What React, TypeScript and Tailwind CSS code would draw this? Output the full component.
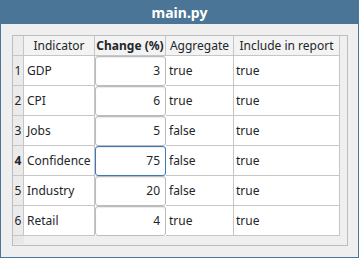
import React from "react";

interface Row {
  name: string;
  change: number;
  aggregate: boolean;
  report: boolean;
}

const rows: Row[] = [
  { name: "GDP", change: 3, aggregate: true, report: true },
  { name: "CPI", change: 6, aggregate: true, report: true },
  { name: "Jobs", change: 5, aggregate: false, report: true },
  { name: "Confidence", change: 75, aggregate: false, report: true },
  { name: "Industry", change: 20, aggregate: false, report: true },
  { name: "Retail", change: 4, aggregate: true, report: true },
];

const current = 3;

const App: React.FC = () => {
  return (
    <div
      className="w-[359px] h-[258px] flex flex-col bg-[#4b7596] text-[#232629] overflow-hidden"
      style={{ fontFamily: '"Noto Sans", "Open Sans", sans-serif' }}
    >
      <div className="h-[24px] shrink-0 flex items-center justify-center text-white font-bold text-[14px]">
        main.py
      </div>
      <div className="flex-1 mx-px mb-px bg-[#efefef] pt-[11px] pl-[11px] pr-[10px] pb-[11px]">
        <div className="h-[211px] border border-[#bdbdbd] bg-[#efefef] text-[12px] whitespace-nowrap">
          {/* header */}
          <div className="flex h-[20px]">
            <div className="w-[11px] border-r border-b border-[#c6c6c6] bg-[#ececec]" />
            <div className="w-[71px] border-r border-b border-[#c6c6c6] bg-[#f3f3f3] flex items-center justify-center">
              Indicator
            </div>
            <div className="w-[71px] border-r border-b border-[#c6c6c6] bg-[#f3f3f3] flex items-center justify-center font-bold">
              Change (%)
            </div>
            <div className="w-[68px] border-r border-b border-[#c6c6c6] bg-[#f3f3f3] flex items-center justify-center">
              Aggregate
            </div>
            <div className="w-[106px] border-r border-b border-[#c6c6c6] bg-[#f3f3f3] flex items-center justify-center">
              Include in report
            </div>
          </div>
          {rows.map((r, i) => (
            <div key={r.name} className="flex h-[30px]">
              <div
                className={`w-[11px] border-r border-b border-[#c6c6c6] bg-[#ebebeb] flex items-center justify-center ${
                  i === current ? "font-bold" : ""
                }`}
              >
                {i + 1}
              </div>
              <div className="w-[71px] border-r border-b border-[#c6c6c6] bg-white flex items-center pl-[3px]">
                {r.name}
              </div>
              <div className="w-[71px] bg-white">
                <div
                  className={`h-full rounded-[3px] border flex items-center justify-end pr-[5px] shadow-[inset_0_1px_1px_rgba(0,0,0,0.08)] ${
                    i === current ? "border-[#3d7ab5]" : "border-[#bcbcbc]"
                  }`}
                >
                  {r.change}
                </div>
              </div>
              <div className="w-[68px] border-r border-b border-[#c6c6c6] bg-white flex items-center pl-[3px]">
                {r.aggregate ? "true" : "false"}
              </div>
              <div className="w-[106px] border-r border-b border-[#c6c6c6] bg-white flex items-center pl-[2px]">
                {r.report ? "true" : "false"}
              </div>
            </div>
          ))}
          <div className="flex h-[8px]">
            <div className="w-[11px] bg-[#e8e8e8]" />
          </div>
        </div>
      </div>
    </div>
  );
};

export default App;
